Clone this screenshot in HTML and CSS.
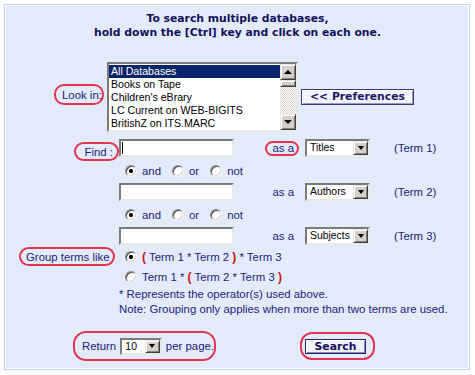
FILE: index.html
```html
<!DOCTYPE html>
<html>
<head>
<meta charset="utf-8">
<link rel="stylesheet" href="styles.css">
</head>
<body>
<div class="panel">
  <div class="heading">To search multiple databases,<br>hold down the [Ctrl] key and click on each one.</div>

  <div class="look-row">
    <span class="oval look-label">Look in:</span>
    <div class="listbox">
      <ul class="options">
        <li class="sel">All Databases</li>
        <li>Books on Tape</li>
        <li>Children's eBrary</li>
        <li>LC Current on WEB-BIGITS</li>
        <li>BritishZ on ITS.MARC</li>
      </ul>
      <div class="scrollbar">
        <span class="sb-btn up"></span>
        <span class="sb-thumb"></span>
        <span class="sb-track"></span>
        <span class="sb-btn down"></span>
      </div>
    </div>
    <span class="pref-btn">&lt;&lt; Preferences</span>
  </div>

  <div class="terms">
    <span class="oval find-label">Find :</span>
    <span class="textbox"><span class="caret"></span></span>
    <span class="asa oval">as a</span>
    <span class="select"><span class="val">Titles</span><span class="drop"></span></span>
    <span class="term">(Term 1)</span>

    <div class="ops">
      <span class="opt"><span class="radio on"></span>and</span>
      <span class="opt"><span class="radio"></span>or</span>
      <span class="opt"><span class="radio"></span>not</span>
    </div>

    <span class="textbox"></span>
    <span class="asa">as a</span>
    <span class="select"><span class="val">Authors</span><span class="drop"></span></span>
    <span class="term">(Term 2)</span>

    <div class="ops">
      <span class="opt"><span class="radio on"></span>and</span>
      <span class="opt"><span class="radio"></span>or</span>
      <span class="opt"><span class="radio"></span>not</span>
    </div>

    <span class="textbox"></span>
    <span class="asa">as a</span>
    <span class="select"><span class="val">Subjects</span><span class="drop"></span></span>
    <span class="term">(Term 3)</span>

    <span class="oval group-label">Group terms like</span>
    <div class="group-opt"><span class="radio on"></span><span><b class="paren">(</b> Term 1 * Term 2 <b class="paren">)</b> * Term 3</span></div>
    <div class="group-opt"><span class="radio"></span><span>Term 1 * <b class="paren">(</b> Term 2 * Term 3 <b class="paren">)</b></span></div>

    <div class="note">* Represents the operator(s) used above.</div>
    <div class="note">Note: Grouping only applies when more than two terms are used.</div>
  </div>

  <div class="bottom">
    <span class="oval return-oval">Return <span class="select small"><span class="val">10</span><span class="drop"></span></span> per page.</span>
    <span class="oval search-oval"><span class="search-btn">Search</span></span>
  </div>
</div>
</body>
</html>
```

FILE: styles.css
```css
body {
  margin: 0;
  background: #ffffff;
  font-family: "Liberation Sans", Arial, sans-serif;
  font-size: 11.4px;
  color: #22227a;
}

.panel {
  margin: 4px 0 0 4px;
  width: 466px;
  box-sizing: border-box;
  border: 1px solid #c3d2f3;
  box-shadow: inset 0 0 0 1px #ffffff;
  background: #e3ebfb;
  padding: 7px 0 8px 1px;
}

.heading {
  font-family: "DejaVu Sans", Verdana, sans-serif;
  font-weight: bold;
  font-size: 10.8px;
  line-height: 14px;
  text-align: center;
  color: #12125a;
}

.oval {
  border: 2px solid #e53350;
  border-radius: 10px;
  box-sizing: border-box;
  display: flex;
  align-items: center;
}

/* Look in row */
.look-row {
  display: flex;
  align-items: center;
  margin-top: 22px;
  padding-left: 48px;
}

.look-label {
  width: 50px;
  height: 21px;
  padding-left: 6px;
  margin-right: 3px;
  align-self: flex-start;
  margin-top: 22px;
  white-space: nowrap;
}

.listbox {
  display: flex;
  width: 191px;
  height: 70px;
  box-sizing: border-box;
  border: 2px solid;
  border-color: #7b7b7b #e8e8e8 #e8e8e8 #7b7b7b;
  background: #ffffff;
}

.options {
  list-style: none;
  margin: 0;
  padding: 1px 0 0 0;
  flex: 1;
  font-size: 10.6px;
  color: #000000;
}

.options li {
  height: 13px;
  line-height: 13px;
  padding-left: 2px;
  white-space: nowrap;
}

.options li.sel {
  background: #0a246a;
  color: #ffffff;
}

.scrollbar {
  width: 16px;
  display: flex;
  flex-direction: column;
}

.sb-btn, .sb-thumb, .drop {
  background: #d4d0c8;
  box-sizing: border-box;
  border: 1px solid;
  border-color: #e8e6e0 #404040 #404040 #e8e6e0;
  box-shadow: inset 1px 1px #ffffff, inset -1px -1px #808080;
  display: flex;
  align-items: center;
  justify-content: center;
}

.sb-btn {
  height: 16px;
  flex: none;
}

.sb-btn.up::before {
  content: "";
  border: 4px solid transparent;
  border-bottom-color: #000000;
  border-top-width: 0;
}

.sb-btn.down::before, .drop::before {
  content: "";
  border: 4px solid transparent;
  border-top-color: #000000;
  border-bottom-width: 0;
}

.sb-thumb {
  height: 7px;
  flex: none;
}

.sb-track {
  flex: 1;
  background: repeating-conic-gradient(#d4d0c8 0 25%, #ffffff 0 50%) 0 0 / 2px 2px;
}

.pref-btn {
  margin-left: 3px;
  width: 113px;
  height: 16px;
  box-sizing: border-box;
  border: 1px solid #3a3a82;
  box-shadow: inset 1px 1px #ffffff, inset -1px -1px #9a9ac4;
  background: #f2f4fb;
  font-family: "DejaVu Sans", Verdana, sans-serif;
  font-weight: bold;
  font-size: 10.8px;
  line-height: 14px;
  text-align: center;
  color: #1a1a66;
  white-space: nowrap;
}

/* Terms grid */
.terms {
  display: grid;
  grid-template-columns: 113px 115px 71px 65px 1fr;
  grid-template-rows: 18px 26px 18px 26px 18px 23px 18px 16px 14px;
  align-items: center;
  margin-top: 7px;
}

.find-label {
  grid-column: 1;
  justify-self: end;
  align-self: start;
  margin-top: 3px;
  width: 45px;
  height: 19px;
  justify-content: flex-end;
  padding-right: 4px;
  white-space: nowrap;
}

.textbox {
  grid-column: 2;
  width: 115px;
  height: 18px;
  box-sizing: border-box;
  border: 2px solid;
  border-color: #7b7b7b #e8e8e8 #e8e8e8 #7b7b7b;
  background: #ffffff;
  display: flex;
  align-items: center;
}

.caret {
  width: 1px;
  height: 12px;
  margin-left: 1px;
  background: #000000;
}

.asa {
  grid-column: 3;
  justify-self: end;
  margin-right: 6px;
  height: 15px;
  padding: 0 3px 0 5px;
  border: 2px solid transparent;
  border-radius: 8px;
  box-sizing: border-box;
  display: flex;
  align-items: center;
  white-space: nowrap;
}

.asa.oval {
  border-color: #e53350;
}

.terms > .select {
  grid-column: 4;
}

.select {
  width: 65px;
  height: 18px;
  box-sizing: border-box;
  border: 2px solid;
  border-color: #7b7b7b #e8e8e8 #e8e8e8 #7b7b7b;
  background: #ffffff;
  display: flex;
  align-items: stretch;
  font-size: 10.4px;
  color: #000000;
}

.select .val {
  flex: 1;
  padding-left: 3px;
  line-height: 14px;
}

.drop {
  width: 15px;
  flex: none;
}

.drop::before {
  border-width: 4px 3.5px 0 3.5px;
}

.term {
  grid-column: 5;
  padding-left: 24px;
  white-space: nowrap;
}

.ops {
  grid-column: 2 / -1;
  display: flex;
  align-items: center;
  padding-left: 6px;
  padding-top: 2px;
}

.opt {
  display: flex;
  align-items: center;
  margin-right: 11px;
}

.radio {
  width: 12px;
  height: 12px;
  flex: none;
  box-sizing: border-box;
  border-radius: 50%;
  border: 1px solid;
  border-color: #8a8a8a #f4f4f4 #f4f4f4 #8a8a8a;
  box-shadow: inset 1px 1px #505050, inset -1px -1px #d4d0c8;
  background: #ffffff;
  margin-right: 5px;
}

.radio.on {
  background: radial-gradient(circle, #000000 0 1.8px, #ffffff 2.4px);
}

.group-label {
  grid-column: 1;
  grid-row: 6;
  justify-self: end;
  margin-right: 4px;
  width: 96px;
  height: 19px;
  padding-left: 5px;
  white-space: nowrap;
}

.group-opt {
  grid-column: 2 / -1;
  display: flex;
  align-items: center;
  padding-left: 6px;
  white-space: pre;
}

.paren {
  color: #cc1111;
  font-weight: bold;
  font-size: 12px;
}

.note {
  grid-column: 2 / -1;
  line-height: 14px;
  white-space: nowrap;
}

/* Bottom row */
.bottom {
  display: flex;
  align-items: center;
  margin-top: 15px;
  padding-left: 67px;
}

.return-oval {
  width: 143px;
  height: 30px;
  border-radius: 13px;
  padding-left: 7px;
  white-space: pre;
}

.select.small {
  width: 42px;
  height: 17px;
  margin: 0 1px;
}

.select.small .val {
  line-height: 13px;
}

.search-oval {
  margin-left: 84px;
  width: 75px;
  height: 28px;
  border-radius: 12px;
  padding-left: 3px;
}

.search-btn {
  width: 61px;
  height: 15px;
  box-sizing: border-box;
  border: 1px solid #24246e;
  box-shadow: inset 1px 1px #ffffff, inset -1px -1px #8888bb;
  background: #eef0fa;
  font-family: "DejaVu Sans", Verdana, sans-serif;
  font-weight: bold;
  font-size: 10.8px;
  line-height: 13px;
  text-align: center;
  color: #12125a;
}
```
